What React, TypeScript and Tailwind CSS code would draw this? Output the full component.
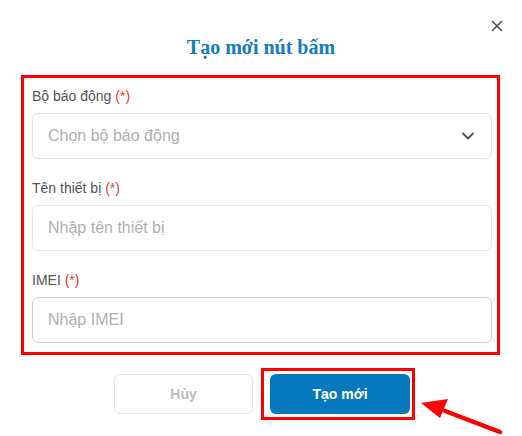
import { X, ChevronDown } from "lucide-react";

const fields = [
  { label: "Bộ báo động", placeholder: "Chọn bộ báo động", select: true },
  { label: "Tên thiết bị", placeholder: "Nhập tên thiết bị" },
  { label: "IMEI", placeholder: "Nhập IMEI", dark: true },
];

export default function App() {
  return (
    <div className="relative h-[436px] w-[522px] overflow-hidden bg-white font-['Liberation_Sans',Arial,sans-serif]">
      {/* Close */}
      <button className="absolute right-[16px] top-[17px] text-[#555]" aria-label="close">
        <X className="size-[18px]" strokeWidth={2.3} />
      </button>

      <h2 className="pt-[35px] text-center font-['Liberation_Serif','Times_New_Roman',serif] text-[20px] font-bold leading-[24px] text-[#127cc0]">
        Tạo mới nút bấm
      </h2>

      {/* Highlighted form */}
      <div className="ml-[21px] mr-[22px] mt-[16px] flex flex-col gap-[19px] border-[3px] border-[#f00] pb-[9px] pl-[8px] pr-[5px] pt-[8px]">
        {fields.map((f) => (
          <div key={f.label}>
            <p className="mb-[7px] text-[14px] leading-[20px] text-[#555]">
              {f.label} <span className="text-[#e53935]">(*)</span>
            </p>
            <div
              className={`flex h-[46px] items-center justify-between rounded-[6px] border px-[15px] ${
                f.dark ? "border-[#d0d0d0]" : "border-[#e6e6e6]"
              }`}
            >
              <span className="text-[16px] text-[#b0b0b0]">{f.placeholder}</span>
              {f.select && <ChevronDown className="mr-[-2px] size-[20px] text-[#555]" strokeWidth={2.2} />}
            </div>
          </div>
        ))}
      </div>

      {/* Actions */}
      <div className="mt-[19px] flex justify-center gap-[17px] pl-[2px]">
        <button className="h-[40px] w-[139px] rounded-[6px] border border-[#e6e6e6] text-[14px] font-bold text-[#bdbdbd]">
          Hủy
        </button>
        <div className="relative">
          <button className="h-[40px] w-[140px] rounded-[6px] bg-[#0679be] text-[14px] font-bold text-white">
            Tạo mới
          </button>
          <div className="pointer-events-none absolute -bottom-[6px] -left-[9px] -right-[5px] -top-[6px] border-[3px] border-[#f00]" />
        </div>
      </div>

      {/* Arrow annotation */}
      <svg className="absolute left-[415px] top-[394px]" width="100" height="42" viewBox="0 0 100 42">
        <path d="M85 38 L30 17" stroke="#f00" strokeWidth="4.5" strokeLinecap="round" />
        <path d="M6 9 L33 5 L25 24 Z" fill="#f00" />
      </svg>
    </div>
  );
}
